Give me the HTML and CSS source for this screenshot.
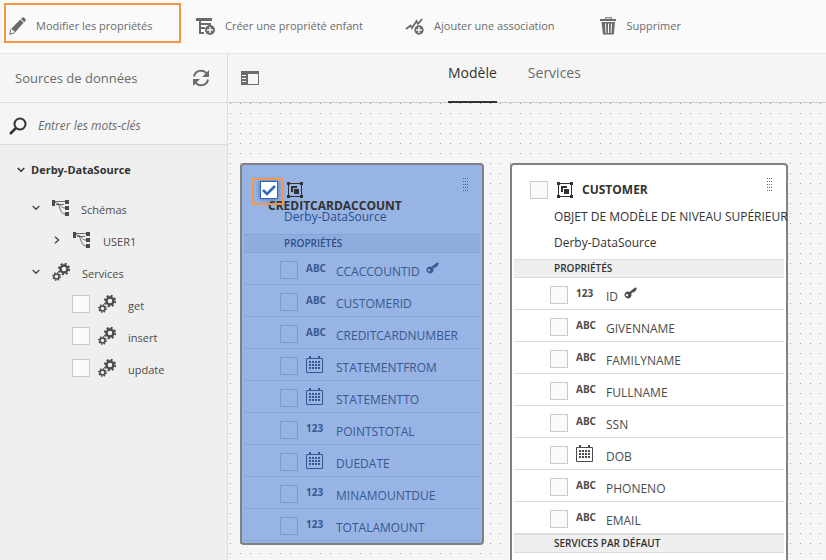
FILE: index.html
```html
<!DOCTYPE html>
<html lang="fr">
<head>
<meta charset="utf-8">
<title>Modèle de données</title>
<link rel="stylesheet" href="styles.css">
</head>
<body>
<svg class="sprite" aria-hidden="true">
  <symbol id="schema" viewBox="0 0 17 17"><path fill="currentColor" d="M0 0h3v6H0zM13 0h4v4h-4zM13 6h4v4h-4zM13 12h4v4h-4z"/><path d="M3 1.500H13M3 2.500L7 4C9 5 9 8 13 8M6 4C8 6 8 14 13 14M4 4.500h8" fill="none" stroke="currentColor" stroke-width=".8"/></symbol>
  <symbol id="gears" viewBox="0 0 18 18"><circle cx="12" cy="6" r="3.500" fill="none" stroke="currentColor" stroke-width="2.400"/><circle cx="12" cy="6" r="5.200" fill="none" stroke="currentColor" stroke-width="2" stroke-dasharray="2.040 2.040"/><circle cx="4.500" cy="13.500" r="2.500" fill="none" stroke="currentColor" stroke-width="1.600"/><circle cx="4.500" cy="13.500" r="3.700" fill="none" stroke="currentColor" stroke-width="1.400" stroke-dasharray="1.450 1.450"/></symbol>
  <symbol id="calendar" viewBox="0 0 18 18"><path d="M.5 2.500h16v14H.5z" fill="none" stroke="currentColor"/><path d="M3 0h2v3H3zM12 0h2v3h-2zM3 5h2v2H3zM6 5h2v2H6zM9 5h2v2H9zM12 5h2v2h-2zM3 8h2v2H3zM6 8h2v2H6zM9 8h2v2H9zM12 8h2v2h-2zM3 11h2v2H3zM6 11h2v2H6zM9 11h2v2H9zM12 11h2v2h-2z" fill="currentColor"/></symbol>
  <symbol id="key" viewBox="0 0 13 12"><path fill="currentColor" fill-rule="evenodd" d="M3.500 4.500a3.500 3.500 0 0 1 2 .5L11 .5l1.500.3.3 1.200-1 .5.200 1.500-1.500.2-.3 1.300-1.400-.2-1.600 1.200A3.500 3.500 0 1 1 3.500 4.500zM3 7a1.200 1.200 0 1 0 .1 2.400A1.200 1.200 0 0 0 3 7z"/></symbol>
  <symbol id="object" viewBox="0 0 16 16"><path d="M1.500 1.500h13v13h-13z" fill="none" stroke="currentColor"/><path fill="currentColor" d="M0 0h3v3H0zM13 0h3v3h-3zM0 13h3v3H0zM13 13h3v3h-3zM4 4h6v2H6v4H4zM7 7h5v5H7z"/></symbol>
  <symbol id="down" viewBox="0 0 8 6"><path d="M.7 1L4 4.300 7.300 1" fill="none" stroke="currentColor" stroke-width="1.500"/></symbol>
  <symbol id="right" viewBox="0 0 6 8"><path d="M1 .7L4.500 4 1 7.300" fill="none" stroke="currentColor" stroke-width="1.500"/></symbol>
  <symbol id="grip" viewBox="0 0 5 13"><path d="M.5 0v13M2.500 0v13M4.500 0v13" stroke="currentColor" stroke-dasharray="1 2" fill="none"/></symbol>
</svg>

<header class="toolbar">
  <button class="action highlighted"><svg class="i18" viewBox="0 0 18 18"><path fill="currentColor" d="M12 1.800l1.500-1.200q.8-.6 1.500.1l1.600 1.500q.6.700 0 1.400L15.200 5.200zM11.300 2.400l3.300 3.300L6.200 15.200 2.300 11.700z"/><path d="M2 12.300L.7 17.300 5.700 15.700" fill="none" stroke="currentColor"/></svg>Modifier les propriétés</button>
  <button class="action child"><svg class="i20" viewBox="0 0 20 18"><path fill="currentColor" d="M0 1h16v3H0zM3 4h2v13H3zM5 6h10v2H5zM5 10h4v2H5zM5 15h3v2H5z"/><circle cx="14" cy="13" r="5" fill="currentColor"/><path d="M14 10v6M11 13h6" stroke="#fafafa" stroke-width="1.500"/></svg>Créer une propriété enfant</button>
  <button class="action assoc"><svg class="i20" viewBox="0 0 20 18"><path fill="none" stroke="currentColor" stroke-width="1.800" d="M1 12L5.500 8.500 7 11 11.500 4 13 7 17 2"/><circle cx="14" cy="13" r="5.500" fill="#fafafa"/><circle cx="14" cy="13" r="4.700" fill="currentColor"/><path d="M14 10v6M11 13h6" stroke="#fafafa" stroke-width="1.500"/></svg>Ajouter une association</button>
  <button class="action delete"><svg class="i18" viewBox="0 0 18 18"><path fill="currentColor" fill-rule="evenodd" d="M0 2h5V1.500Q5 .3 6 .3h5q1 0 1 1V2h4v2H0zM6 2h5v-.7H6zM1.500 5h13.500l-1.200 12.500H3zM5 6.500L5.500 16h1L6 6.500zM8 6.500V16h1V6.500zM11 6.500L10.500 16h1L12 6.500z"/></svg>Supprimer</button>
</header>

<div class="workspace">
  <aside class="sidebar">
    <div class="sources">
      <h2>Sources de données</h2>
      <button class="icon-button" aria-label="Actualiser"><svg class="i18" viewBox="0 0 18 18"><path d="M2 7.500A7 7 0 0 1 14.500 4.500M16 10.500A7 7 0 0 1 3.500 13.500" fill="none" stroke="currentColor" stroke-width="2"/><path fill="currentColor" d="M17 1v7h-7zM1 17v-7h7z"/></svg></button>
    </div>
    <div class="search">
      <svg class="i18" viewBox="0 0 18 18"><circle cx="11" cy="7" r="5.500" fill="none" stroke="currentColor" stroke-width="2"/><path d="M7 11L1 17" stroke="currentColor" stroke-width="2.500"/></svg>
      <input type="search" aria-label="Entrer les mots-clés" placeholder="Entrer les mots-clés">
    </div>
    <ul class="tree">
      <li class="node root"><svg class="down"><use href="#down"/></svg><span>Derby-DataSource</span></li>
      <li class="node level1"><svg class="down"><use href="#down"/></svg><svg class="schema"><use href="#schema"/></svg><span>Schémas</span></li>
      <li class="node level2"><svg class="right"><use href="#right"/></svg><svg class="schema"><use href="#schema"/></svg><span>USER1</span></li>
      <li class="node level1"><svg class="down"><use href="#down"/></svg><svg class="i18"><use href="#gears"/></svg><span>Services</span></li>
      <li><label class="node leaf"><input type="checkbox"><svg class="i18"><use href="#gears"/></svg><span>get</span></label></li>
      <li><label class="node leaf"><input type="checkbox"><svg class="i18"><use href="#gears"/></svg><span>insert</span></label></li>
      <li><label class="node leaf"><input type="checkbox"><svg class="i18"><use href="#gears"/></svg><span>update</span></label></li>
    </ul>
  </aside>

  <main class="main">
    <div class="main-head">
      <button class="icon-button" aria-label="Afficher le panneau"><svg class="i18" viewBox="0 0 18 18"><path fill="currentColor" fill-rule="evenodd" d="M0 2h18v14H0zM7 5v10h10V5zM1 6v1h4V6zM1 9v1h4V9zM1 12v1h4v-1z"/></svg></button>
      <nav class="tabs"><a class="tab active" href="#modele">Modèle</a><a class="tab" href="#services">Services</a></nav>
    </div>
    <div class="canvas" id="modele">
      <article class="card selected">
        <header class="card-head">
          <span class="pick marked"><input type="checkbox" checked aria-label="CREDITCARDACCOUNT"></span>
          <svg class="i16"><use href="#object"/></svg>
          <svg class="grip"><use href="#grip"/></svg>
          <h3>CREDITCARDACCOUNT</h3>
        </header>
        <p>Derby-DataSource</p>
        <h4>PROPRIÉTÉS</h4>
        <ul class="fields">
          <li><label><input type="checkbox"><b>ABC</b><span>CCACCOUNTID</span><svg class="key"><use href="#key"/></svg></label></li>
          <li><label><input type="checkbox"><b>ABC</b><span>CUSTOMERID</span></label></li>
          <li><label><input type="checkbox"><b>ABC</b><span>CREDITCARDNUMBER</span></label></li>
          <li><label><input type="checkbox"><svg class="i18"><use href="#calendar"/></svg><span>STATEMENTFROM</span></label></li>
          <li><label><input type="checkbox"><svg class="i18"><use href="#calendar"/></svg><span>STATEMENTTO</span></label></li>
          <li><label><input type="checkbox"><b>123</b><span>POINTSTOTAL</span></label></li>
          <li><label><input type="checkbox"><svg class="i18"><use href="#calendar"/></svg><span>DUEDATE</span></label></li>
          <li><label><input type="checkbox"><b>123</b><span>MINAMOUNTDUE</span></label></li>
          <li><label><input type="checkbox"><b>123</b><span>TOTALAMOUNT</span></label></li>
        </ul>
      </article>

      <article class="card wide">
        <header class="card-head">
          <span class="pick"><input type="checkbox" aria-label="CUSTOMER"></span>
          <svg class="i16"><use href="#object"/></svg>
          <h3>CUSTOMER</h3>
          <svg class="grip"><use href="#grip"/></svg>
        </header>
        <p>OBJET DE MODÈLE DE NIVEAU SUPÉRIEUR</p>
        <p>Derby-DataSource</p>
        <h4>PROPRIÉTÉS</h4>
        <ul class="fields">
          <li><label><input type="checkbox"><b>123</b><span>ID</span><svg class="key"><use href="#key"/></svg></label></li>
          <li><label><input type="checkbox"><b>ABC</b><span>GIVENNAME</span></label></li>
          <li><label><input type="checkbox"><b>ABC</b><span>FAMILYNAME</span></label></li>
          <li><label><input type="checkbox"><b>ABC</b><span>FULLNAME</span></label></li>
          <li><label><input type="checkbox"><b>ABC</b><span>SSN</span></label></li>
          <li><label><input type="checkbox"><svg class="i18"><use href="#calendar"/></svg><span>DOB</span></label></li>
          <li><label><input type="checkbox"><b>ABC</b><span>PHONENO</span></label></li>
          <li><label><input type="checkbox"><b>ABC</b><span>EMAIL</span></label></li>
        </ul>
        <h4 class="follow">SERVICES PAR DÉFAUT</h4>
        <div class="card-end"></div>
      </article>
    </div>
  </main>
</div>
</body>
</html>
```

FILE: styles.css
```css
* { box-sizing: border-box; }

body {
  margin: 0;
  height: 100vh;
  display: flex;
  flex-direction: column;
  overflow: hidden;
  background: #f5f5f5;
  color: #323232;
  font: 12px/18px "Open Sans", "Noto Sans", sans-serif;
}

h2, h3, h4, p, ul { margin: 0; padding: 0; }
ul { list-style: none; }
svg { display: block; flex: none; }
button { border: 0; padding: 0; background: none; font: inherit; color: inherit; }
.sprite { position: absolute; width: 0; height: 0; }
.i16 { width: 16px; height: 16px; }
.i18 { width: 18px; height: 18px; }
.i20 { width: 20px; height: 18px; }

input[type="checkbox"] {
  appearance: none;
  flex: none;
  display: block;
  margin: 0;
  width: 18px;
  height: 18px;
  border: 1px solid #cacaca;
  background: #fafafa;
}

/* Toolbar */
.toolbar {
  flex: none;
  display: flex;
  align-items: flex-start;
  height: 54px;
  padding: 3px 4px;
  background: #fafafa;
  border-bottom: 1px solid #e4e4e4;
  color: #6b6b6b;
  font-size: 11px;
}
.action { display: flex; align-items: center; height: 46px; gap: 9px; white-space: nowrap; }
.highlighted {
  width: 177px;
  height: 40px;
  padding: 6px 3px 0;
  border: 2px solid #f79646;
  margin-right: 15px;
}
.assoc { margin-left: 42px; }
.delete { margin-left: 45px; }

/* Sidebar */
.workspace { flex: 1; min-height: 0; display: flex; }
.sidebar {
  flex: none;
  width: 228px;
  display: flex;
  flex-direction: column;
  border-right: 1px solid #dcdcdc;
}
.sources {
  flex: none;
  display: flex;
  align-items: center;
  justify-content: space-between;
  height: 49px;
  padding: 0 17px 0 15px;
  border-bottom: 1px solid #dcdcdc;
  color: #6b6b6b;
}
.sources h2 { font-size: 13px; font-weight: 400; }
.search {
  flex: none;
  display: flex;
  align-items: center;
  gap: 11px;
  height: 42px;
  padding: 4px 9px 0;
  border-bottom: 1px solid #dcdcdc;
}
.search input {
  flex: 1;
  min-width: 0;
  padding: 0;
  border: 0;
  outline: 0;
  background: none;
  font: inherit;
  font-style: italic;
}
.search input::placeholder { color: #6b6b6b; opacity: 1; }
.tree { flex: 1; padding-top: 9px; background: #efefef; font-size: 11px; }
.node { display: flex; align-items: center; height: 32px; color: #4b4b4b; }
.node span { padding-top: 4px; }
.down { width: 8px; height: 6px; }
.right { width: 6px; height: 8px; }
.schema { width: 17px; height: 17px; }
.root { gap: 6px; padding-left: 17px; margin-bottom: 6px; font-weight: 700; color: #323232; }
.root span { padding-top: 0; }
.level1 { gap: 12px; padding-left: 32px; }
.level2 { gap: 13px; padding-left: 54px; }
.leaf { gap: 8px; padding-left: 72px; }
.leaf span { padding-left: 4px; }

/* Main area */
.main { flex: 1; min-width: 0; display: flex; flex-direction: column; }
.main-head {
  flex: none;
  display: flex;
  align-items: center;
  height: 49px;
  padding-left: 13px;
  border-bottom: 1px solid #cfcfcf;
  color: #6b6b6b;
}
.tabs { display: flex; gap: 31px; margin-left: 189px; height: 49px; }
.tab {
  height: 49px;
  padding-top: 10px;
  font-size: 14px;
  color: #6b6b6b;
  text-decoration: none;
}
.tab.active { color: #323232; border-bottom: 2px solid #323232; }

.canvas {
  flex: 1;
  min-height: 0;
  display: flex;
  align-items: flex-start;
  gap: 26px;
  padding: 60px 12px;
  overflow: auto;
  scrollbar-width: none;
  background: conic-gradient(from 0deg at 1px 1px, transparent 270deg, #a0a0a0 0) 2px 0 / 10px 10px;
}

/* Model cards */
.card {
  flex: none;
  width: 244px;
  padding: 2px;
  border: 2px solid #808080;
  border-radius: 4px;
  background: #fff;
}
.card.wide { width: 278px; }
.card-head {
  display: flex;
  flex-wrap: wrap;
  align-items: center;
  align-content: flex-start;
  column-gap: 9px;
  height: 37px;
  padding: 14px 12px 0 16px;
}
.card-head h3 { font-size: 12px; line-height: 14px; }
.grip { align-self: flex-start; width: 5px; height: 13px; margin: -3px 0 0 auto; color: #77577f; }
.pick { position: relative; }
.marked::after {
  content: "";
  position: absolute;
  inset: -3px -6px -6px -8px;
  border: 2px solid #f79646;
}
.card p { height: 26px; padding-left: 40px; line-height: 26px; white-space: nowrap; }
.card h4 {
  height: 19px;
  margin-top: 3px;
  padding-left: 40px;
  border: solid #dcdcdc;
  border-width: 1px 0;
  background: #efefef;
  font-size: 10px;
  font-weight: 600;
  line-height: 17px;
}
.card h4.follow { margin-top: 0; }
.card-end { height: 40px; }
.fields label {
  display: flex;
  align-items: center;
  height: 32px;
  padding: 2px 0 0 36px;
  border-bottom: 1px solid #dcdcdc;
  color: #4b4b4b;
}
.fields b { width: 18px; margin: 0 12px 4px 8px; font-size: 10px; font-weight: 700; line-height: 16px; }
.fields .i18 { margin: 0 12px 2px 8px; }
.fields span { padding-top: 4px; }
.key { width: 13px; height: 12px; margin: 0 0 4px 6px; }

.selected { background: #97b4e4; }
.selected .card-head h3 { flex-basis: 100%; padding-left: 8px; }
.selected p { color: #2d4d8c; }
.selected h4 { margin-top: 4px; background: #8faddc; border-color: #84a2d3; color: #2d4d8c; }
.selected label { color: #3a5890; border-color: #84a2d3; }
.selected .fields input { background: transparent; border-color: #7c9bcd; }
.selected .grip { color: #4b5fa5; }
.selected .pick input {
  border: 1px solid #2f66bd;
  background: #fff url("data:image/svg+xml,%3Csvg xmlns='http://www.w3.org/2000/svg' viewBox='0 0 16 16'%3E%3Cpath d='M2 8l4 4 8-8' fill='none' stroke='%232f66bd' stroke-width='2.500'/%3E%3C/svg%3E");
  box-shadow: 0 0 5px #3c6cc0;
}
```
